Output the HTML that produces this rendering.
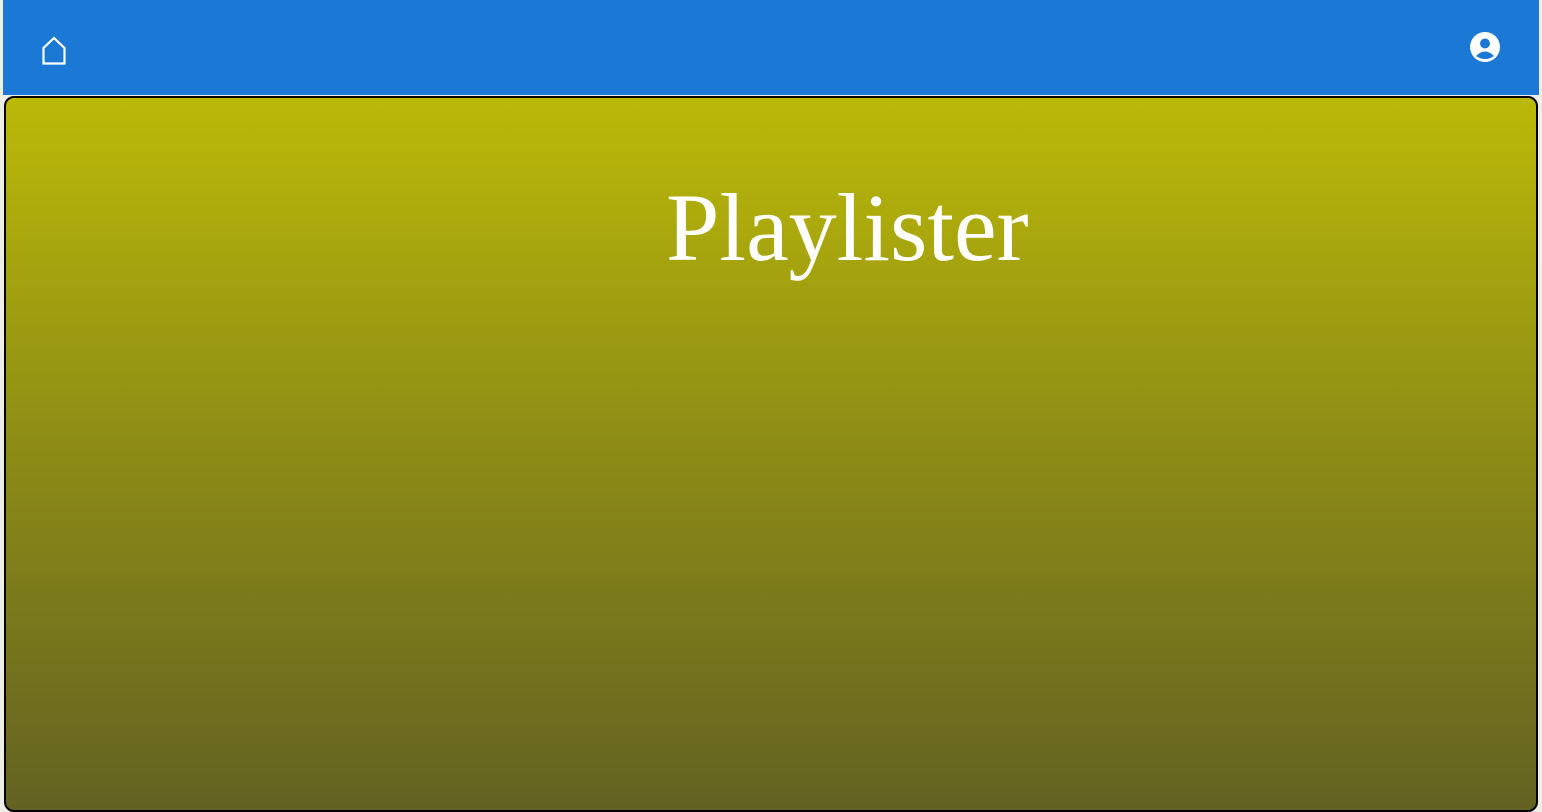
<!DOCTYPE html>
<html><head><style>
html,body{margin:0;padding:0;width:1542px;height:811px;overflow:hidden;background:#eeeee6;}
.bar{position:absolute;left:3px;top:0;width:1536px;height:95px;background:#1b78d4;}
.card{position:absolute;left:4px;top:96px;width:1530px;height:712px;border:2px solid #000;border-radius:10px;background:linear-gradient(to bottom,#bcb808 0%,#b4b20a 8%,#8c8b16 50%,#636222 100%);}
.title{position:absolute;left:666px;top:180px;font-family:"Liberation Serif",serif;font-size:96px;line-height:1;color:#fff;white-space:nowrap;}
</style></head><body>
<div class="bar">
<svg style="position:absolute;left:38px;top:35px" width="26" height="30" viewBox="0 0 26 30"><path d="M2.5 28.5 V13 L13 3 L23.5 13 V28.5 Z" fill="none" stroke="#fff" stroke-width="2.2"/></svg>
<svg style="position:absolute;left:1467px;top:32px" width="30" height="30" viewBox="0 0 30 30"><circle cx="15" cy="15" r="15" fill="#fff"/><circle cx="15" cy="11.5" r="5" fill="#1b78d4"/><path d="M6 24 Q15 15 24 24 Q15 30 6 24 Z" fill="#1b78d4"/></svg>
</div>
<div class="card"></div>
<div class="title">Playlister</div>
</body></html>
